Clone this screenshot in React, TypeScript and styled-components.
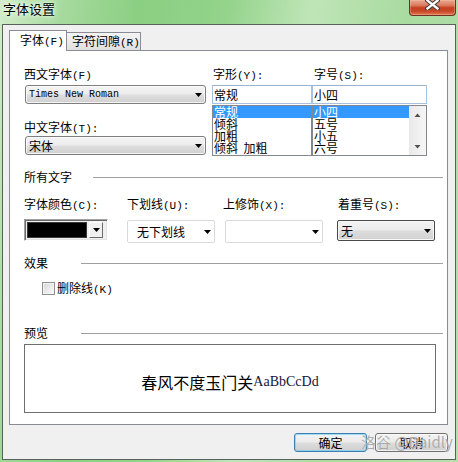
import React from "react";
import styled, { createGlobalStyle, css } from "styled-components";

const GlobalStyle = createGlobalStyle`
  html, body { margin: 0; padding: 0; }
  body {
    width: 458px; height: 462px; overflow: hidden; background: #fff;
    font-family: "Noto Sans CJK SC", "Noto Sans", sans-serif;
    font-size: 12px; color: #000;
  }
  * { box-sizing: border-box; }
`;

const Window = styled.div`
  position: relative;
  width: 458px;
  height: 462px;
  display: flex;
  flex-direction: column;
  background: linear-gradient(100deg, #d2edcb 0%, #a6da9d 12%, #8bcf82 26%, #93d38b 42%, #bfe5b7 58%, #a9dba0 76%, #b5e0ac 100%);
`;

const TitleBar = styled.div`
  height: 24px;
  flex: none;
  display: flex;
  justify-content: space-between;
  align-items: flex-start;
  padding: 0 2px 0 3px;
`;

const Title = styled.div`
  font-size: 13px;
  line-height: 18px;
  color: #000;
  text-shadow: 0 0 6px rgba(255, 255, 255, 0.95), 0 0 3px rgba(255, 255, 255, 0.9);
`;

const CloseButton = styled.div`
  width: 47px;
  height: 16px;
  display: flex;
  justify-content: center;
  align-items: flex-start;
  border: 1px solid #6d3022;
  border-top: none;
  border-radius: 0 0 4px 4px;
  background: linear-gradient(#e9a990 0%, #dc7c60 35%, #c4401f 52%, #c8472a 75%, #e27a4f 100%);
  box-shadow: inset 0 0 0 1px rgba(255, 200, 180, 0.35);
  svg { margin-top: -1px; }
`;

const Client = styled.div`
  flex: 1;
  margin: 0 2px 2px 2px;
  border: 1px solid #56625a;
  background: #f0f0f0;
  display: flex;
  flex-direction: column;
  padding: 6px 7px 7px 6px;
`;

const TabStrip = styled.div`
  height: 20px;
  flex: none;
  display: flex;
  align-items: flex-end;
  margin-bottom: -1px;
  position: relative;
  z-index: 1;
`;

const Tab = styled.div<{ $active?: boolean; $w: number }>`
  width: ${(p) => p.$w}px;
  border: 1px solid #898c95;
  font-size: 12px;
  white-space: nowrap;
  ${(p) =>
    p.$active
      ? css`
          height: 21px;
          border-bottom: none;
          background: #fff;
          line-height: 18px;
          padding-left: 10px;
        `
      : css`
          height: 19px;
          border-left: none;
          background: linear-gradient(#f4f4f4, #e0e0e0);
          line-height: 16px;
          padding-left: 5px;
        `}
`;

const Key = styled.span`
  font-family: "Liberation Mono", monospace;
  font-size: 11px;
`;

const Panel = styled.div`
  flex: 1;
  background: #fff;
  border: 1px solid #898c95;
  padding: 16px 0 0 14px;
  display: flex;
  flex-direction: column;
`;

const TopGrid = styled.div`
  display: grid;
  grid-template-columns: 188px 100px 115px;
  align-items: start;
`;

const Column = styled.div`
  display: flex;
  flex-direction: column;
`;

const Label = styled.div<{ $h?: number; $mt?: number; $ml?: number }>`
  height: ${(p) => p.$h ?? 18}px;
  margin-top: ${(p) => p.$mt ?? 0}px;
  margin-left: ${(p) => p.$ml ?? 0}px;
  line-height: 14px;
  font-size: 12px;
  white-space: nowrap;
`;

type ComboVariant = "raised" | "flat" | "focus";

const Combo = styled.div<{ $w: number; $h?: number; $variant?: ComboVariant; $ml?: number; $mt?: number; $pl?: number }>`
  width: ${(p) => p.$w}px;
  height: ${(p) => p.$h ?? 19}px;
  margin-left: ${(p) => p.$ml ?? 0}px;
  margin-top: ${(p) => p.$mt ?? 0}px;
  display: flex;
  align-items: center;
  justify-content: space-between;
  padding: 0 3px 0 ${(p) => p.$pl ?? 3}px;
  ${(p) =>
    p.$variant === "flat"
      ? css`
          background: #fff;
          border: 1px solid #dadada;
          border-radius: 2px;
        `
      : p.$variant === "focus"
      ? css`
          border: 1px solid #4a4a4a;
          border-radius: 2px;
          background: linear-gradient(#f3f3f3 0%, #ebebeb 48%, #dcdcdc 52%, #d2d2d2 100%);
          box-shadow: inset 0 0 0 1px #f8f8f8;
        `
      : css`
          border: 1px solid #7e7e7e;
          border-radius: 3px;
          background: linear-gradient(#f4f4f4 0%, #ececec 48%, #dedede 52%, #d0d0d0 100%);
          box-shadow: inset 0 0 0 1px rgba(255, 255, 255, 0.75);
        `}
`;

const ComboText = styled.span<{ $mono?: boolean }>`
  white-space: pre;
  ${(p) =>
    p.$mono
      ? css`
          font-family: "Liberation Mono", monospace;
          font-size: 10px;
        `
      : css`
          font-size: 12px;
        `}
`;

const TextBox = styled.div`
  height: 19px;
  border: 1px solid #a9c1dc;
  border-top-color: #9bb3cf;
  background: #fff;
  padding-left: 1px;
  font-size: 12px;
  line-height: 17px;
`;

const ListBox = styled.div`
  height: 51px;
  margin-top: 1px;
  border: 1px solid #828790;
  background: #fff;
  display: flex;
  overflow: hidden;
`;

const ListItems = styled.div`
  flex: 1;
  display: flex;
  flex-direction: column;
`;

const ListItem = styled.div<{ $selected?: boolean }>`
  height: 12px;
  line-height: 12px;
  font-size: 12px;
  padding-left: 1px;
  white-space: pre;
  background: ${(p) => (p.$selected ? "#3399ff" : "transparent")};
  color: ${(p) => (p.$selected ? "#fff" : "#000")};
`;

const ScrollBar = styled.div`
  width: 17px;
  flex: none;
  display: flex;
  flex-direction: column;
  justify-content: space-between;
  background: linear-gradient(90deg, #e9e9e9, #f6f6f6);
`;

const ScrollArrow = styled.div`
  height: 17px;
  display: flex;
  align-items: center;
  justify-content: center;
`;

const SectionHeader = styled.div<{ $labelW: number; $mt: number }>`
  width: 419px;
  height: 14px;
  margin-top: ${(p) => p.$mt}px;
  display: grid;
  grid-template-columns: ${(p) => p.$labelW}px 1fr;
  align-items: center;
  font-size: 12px;
  line-height: 14px;
`;

const Rule = styled.div`
  height: 1px;
  background: #a0a0a0;
`;

const FieldRow = styled.div`
  margin-top: 13px;
  display: grid;
  grid-template-columns: 103px 98px 112px 98px;
  align-items: start;
`;

const Field = styled.div`
  display: flex;
  flex-direction: column;
`;

const ColorPicker = styled.div`
  width: 84px;
  height: 22px;
  display: flex;
  align-items: stretch;
  gap: 2px;
  padding: 2px 4px 2px 2px;
  border: 1px solid;
  border-color: #a0a0a0 #ffffff #ffffff #a0a0a0;
  box-shadow: inset 1px 1px 0 #6a6a6a, inset -1px -1px 0 #e4e4e4;
  background: #f0f0f0;
`;

const Swatch = styled.div<{ $color: string }>`
  flex: 1;
  background: ${(p) => p.$color};
  border: 1px solid #3a3a3a;
`;

const PickerButton = styled.div`
  width: 14px;
  display: flex;
  align-items: center;
  justify-content: center;
  border: 1px solid;
  border-color: #ffffff #6a6a6a #6a6a6a #ffffff;
  background: #f0f0f0;
`;

const CheckRow = styled.div`
  margin-top: 12px;
  margin-left: 18px;
  height: 13px;
  display: flex;
  align-items: center;
  gap: 2px;
  font-size: 12px;
  line-height: 13px;
`;

const CheckBox = styled.div`
  width: 13px;
  height: 13px;
  border: 1px solid #8e8f8f;
  background: linear-gradient(135deg, #d6d6d6 0%, #ededed 60%, #fbfbfb 100%);
  box-shadow: inset 0 0 0 1px #f4f4f4;
`;

const Preview = styled.div`
  width: 412px;
  height: 69px;
  margin-top: 4px;
  border: 1px solid #6e6e6e;
  display: flex;
  align-items: center;
  justify-content: center;
  padding-top: 6px;
`;

const PreviewCjk = styled.span`
  font-family: "Noto Sans CJK SC", sans-serif;
  font-size: 16px;
  color: #000;
`;

const PreviewLatin = styled.span`
  font-family: "Liberation Serif", serif;
  font-size: 14px;
  color: #14143c;
`;

const ButtonRow = styled.div`
  flex: none;
  margin-top: 8px;
  height: 19px;
  display: flex;
  justify-content: flex-end;
  gap: 8px;
`;

const Button = styled.div<{ $default?: boolean }>`
  width: 73px;
  height: 19px;
  display: flex;
  align-items: center;
  justify-content: center;
  font-size: 12px;
  border-radius: 3px;
  border: 1px solid ${(p) => (p.$default ? "#3c7fb1" : "#707070")};
  background: linear-gradient(#f3f3f3 0%, #ebebeb 48%, #dddddd 52%, #cfcfcf 100%);
  box-shadow: inset 0 0 0 1px ${(p) => (p.$default ? "rgba(90, 200, 250, 0.55)" : "rgba(255,255,255,0.7)")};
`;

const Watermark = styled.div`
  position: absolute;
  left: 361px;
  top: 432px;
  font-family: "Noto Sans CJK SC", "Noto Sans", sans-serif;
  font-size: 15px;
  line-height: 20px;
  color: rgba(150, 150, 150, 0.8);
  text-shadow: 0 0 1px rgba(255, 255, 255, 0.8);
  pointer-events: none;
  white-space: nowrap;
`;

const Arrow = ({ color = "#000" }: { color?: string }) => (
  <svg width="7" height="4" viewBox="0 0 7 4">
    <polygon points="0,0 7,0 3.5,4" fill={color} />
  </svg>
);

const SmallTri = ({ up }: { up?: boolean }) => (
  <svg width="7" height="4" viewBox="0 0 7 4">
    <polygon points={up ? "0.5,4 6.5,4 3.5,0.5" : "0.5,0 6.5,0 3.5,3.5"} fill="#505050" />
  </svg>
);

export default function App() {
  return (
    <>
      <GlobalStyle />
      <Window>
        <TitleBar>
          <Title>字体设置</Title>
          <CloseButton>
            <svg width="15" height="11" viewBox="0 0 15 11">
              <path d="M2.5 1.5 L12.5 9.5 M12.5 1.5 L2.5 9.5" stroke="#3b3b3b" strokeWidth="4.4" strokeLinecap="square" />
              <path d="M2.5 1.5 L12.5 9.5 M12.5 1.5 L2.5 9.5" stroke="#fff" strokeWidth="2.3" strokeLinecap="square" />
            </svg>
          </CloseButton>
        </TitleBar>
        <Client>
          <TabStrip>
            <Tab $active $w={58}>
              字体<Key>(F)</Key>
            </Tab>
            <Tab $w={74}>
              字符间隙<Key>(R)</Key>
            </Tab>
          </TabStrip>
          <Panel>
            <TopGrid>
              <Column>
                <Label>
                  西文字体<Key>(F)</Key>
                </Label>
                <Combo $w={181} $ml={1}>
                  <ComboText $mono>Times New Roman</ComboText>
                  <Arrow />
                </Combo>
                <Label $mt={16} $h={16}>
                  中文字体<Key>(T):</Key>
                </Label>
                <Combo $w={181} $ml={1}>
                  <ComboText>宋体</ComboText>
                  <Arrow />
                </Combo>
              </Column>
              <Column>
                <Label $ml={1}>
                  字形<Key>(Y):</Key>
                </Label>
                <TextBox>常规</TextBox>
                <ListBox>
                  <ListItems>
                    <ListItem $selected>常规</ListItem>
                    <ListItem>倾斜</ListItem>
                    <ListItem>加粗</ListItem>
                    <ListItem>倾斜  加粗</ListItem>
                  </ListItems>
                </ListBox>
              </Column>
              <Column>
                <Label $ml={2}>
                  字号<Key>(S):</Key>
                </Label>
                <TextBox>小四</TextBox>
                <ListBox>
                  <ListItems>
                    <ListItem $selected>小四</ListItem>
                    <ListItem>五号</ListItem>
                    <ListItem>小五</ListItem>
                    <ListItem>六号</ListItem>
                  </ListItems>
                  <ScrollBar>
                    <ScrollArrow>
                      <SmallTri up />
                    </ScrollArrow>
                    <ScrollArrow>
                      <SmallTri />
                    </ScrollArrow>
                  </ScrollBar>
                </ListBox>
              </Column>
            </TopGrid>

            <SectionHeader $labelW={69} $mt={14}>
              <span>所有文字</span>
              <Rule />
            </SectionHeader>

            <FieldRow>
              <Field>
                <Label $h={22}>
                  字体颜色<Key>(C):</Key>
                </Label>
                <ColorPicker>
                  <Swatch $color="#000" />
                  <PickerButton>
                    <Arrow />
                  </PickerButton>
                </ColorPicker>
              </Field>
              <Field>
                <Label $h={22}>
                  下划线<Key>(U):</Key>
                </Label>
                <Combo $w={88} $h={23} $mt={1} $variant="flat" $pl={9}>
                  <ComboText>无下划线</ComboText>
                  <Arrow />
                </Combo>
              </Field>
              <Field>
                <Label $h={22} $ml={-2}>
                  上修饰<Key>(X):</Key>
                </Label>
                <Combo $w={98} $h={23} $mt={1} $variant="flat">
                  <ComboText> </ComboText>
                  <Arrow />
                </Combo>
              </Field>
              <Field>
                <Label $h={22} $ml={1}>
                  着重号<Key>(S):</Key>
                </Label>
                <Combo $w={98} $h={21} $mt={1} $variant="focus">
                  <ComboText>无</ComboText>
                  <Arrow />
                </Combo>
              </Field>
            </FieldRow>

            <SectionHeader $labelW={57} $mt={13}>
              <span>效果</span>
              <Rule />
            </SectionHeader>

            <CheckRow>
              <CheckBox />
              <span>
                删除线<Key>(K)</Key>
              </span>
            </CheckRow>

            <SectionHeader $labelW={57} $mt={31}>
              <span>预览</span>
              <Rule />
            </SectionHeader>

            <Preview>
              <PreviewCjk>春风不度玉门关</PreviewCjk>
              <PreviewLatin>AaBbCcDd</PreviewLatin>
            </Preview>
          </Panel>
          <ButtonRow>
            <Button $default>确定</Button>
            <Button>取消</Button>
          </ButtonRow>
        </Client>
        <Watermark>洛谷 @Daidly</Watermark>
      </Window>
    </>
  );
}
